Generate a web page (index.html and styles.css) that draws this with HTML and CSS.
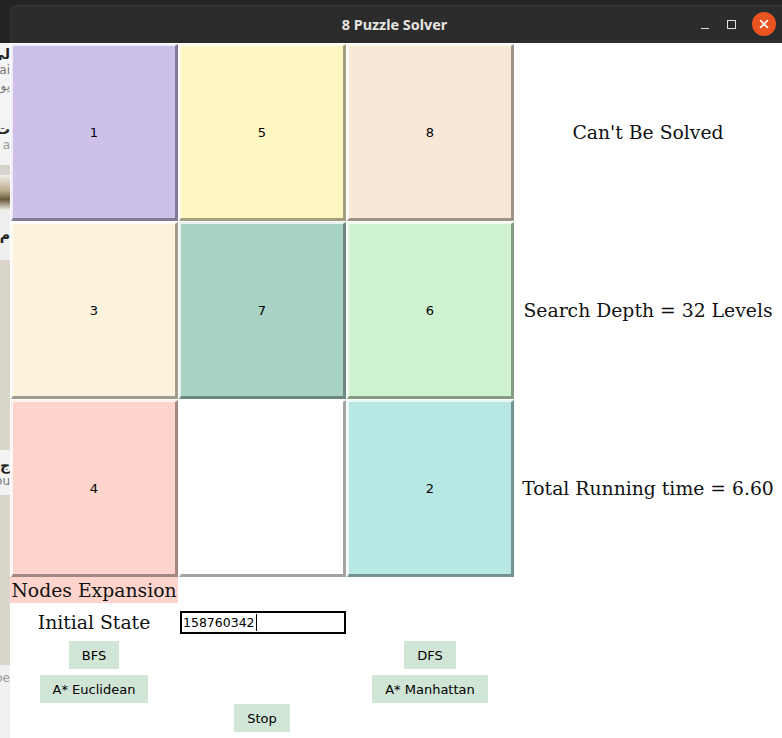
FILE: index.html
```html
<!DOCTYPE html>
<html>
<head>
<meta charset="utf-8">
<title>8 Puzzle Solver</title>
<link rel="stylesheet" href="styles.css">
</head>
<body>
<div class="screen">
  <div class="bgwin">
    <div class="bg-a"><span class="frag f-big">لي</span><span class="frag f-gray">ai</span><span class="frag f-gray">يو</span></div>
    <div class="bg-b"><span class="frag f-big">ت</span><span class="frag f-light">2 a</span></div>
    <div class="bg-band"></div>
    <div class="bg-img"></div>
    <div class="bg-c"><span class="frag f-big">م</span></div>
    <div class="bg-map"></div>
    <div class="bg-d"><span class="frag f-big">ج</span><span class="frag f-gray">ou</span></div>
    <div class="bg-map tall"></div>
    <div class="bg-e"><span class="frag f-light">oe</span></div>
  </div>

  <div class="window">
    <div class="titlebar">
      <span></span>
      <span class="title">8 Puzzle Solver</span>
      <div class="controls">
        <span class="ctl ctl-min"><i></i></span>
        <span class="ctl ctl-max"><i></i></span>
        <span class="ctl ctl-close">
          <svg width="10" height="10" viewBox="0 0 10 10"><path d="M1.5 1.5 L8.5 8.5 M8.5 1.5 L1.5 8.5" stroke="#fff" stroke-width="1.6" stroke-linecap="round"/></svg>
        </span>
      </div>
    </div>

    <div class="app">
      <div class="tile t-lav">1</div>
      <div class="tile t-lemon">5</div>
      <div class="tile t-bisque">8</div>
      <div class="info">Can't Be Solved</div>

      <div class="tile t-cream">3</div>
      <div class="tile t-teal">7</div>
      <div class="tile t-mint">6</div>
      <div class="info">Search Depth = 32 Levels</div>

      <div class="tile t-pink">4</div>
      <div class="tile t-blank"></div>
      <div class="tile t-aqua">2</div>
      <div class="info">Total Running time = 6.60</div>

      <div class="nodes">Nodes Expansion</div>

      <div class="label-init">Initial State</div>
      <div class="entry"><span>158760342</span><i class="caret"></i></div>

      <div class="btn b-bfs">BFS</div>
      <div class="btn b-dfs">DFS</div>

      <div class="btn b-euc">A* Euclidean</div>
      <div class="btn b-man">A* Manhattan</div>

      <div class="btn b-stop">Stop</div>
    </div>
  </div>
</div>
</body>
</html>
```

FILE: styles.css
```css
* { box-sizing: border-box; }
html, body { margin: 0; padding: 0; }
body { background: #222; }

.screen {
  position: relative;
  width: 782px;
  height: 738px;
  overflow: hidden;
  background: #232323;
}

/* background window strip peeking on the left */
.bgwin {
  position: absolute;
  left: 0;
  top: 43px;
  width: 10px;
  bottom: 0;
  display: flex;
  flex-direction: column;
  overflow: hidden;
  box-shadow: inset -1px 0 0 #9a9a9a;
}
.bgwin > div { overflow: hidden; display: flex; flex-direction: column; align-items: flex-end; }
.bg-a { height: 77px; background: #f4f4f4; padding-top: 2px; }
.bg-b { height: 45px; background: #f2f2f2; }
.bg-band { height: 10px; background: #d6d3cf; }
.bg-img { height: 35px; background: linear-gradient(180deg, #f1efea 0%, #b9ab8a 45%, #6a5a3c 70%, #efece6 100%); }
.bg-c { height: 50px; background: #efefef; justify-content: center; }
.bg-map { height: 190px; background: #d9d5cb; }
.bg-map.tall { height: 170px; }
.bg-d { height: 45px; background: #f3f3f3; justify-content: center; }
.bg-e { flex: 1; background: #f0f0f0; padding-top: 6px; }
.frag { white-space: nowrap; font-family: "DejaVu Sans", sans-serif; line-height: 1.3; }
.f-big { font-size: 14px; font-weight: bold; color: #222; }
.f-gray { font-size: 12px; color: #777; }
.f-light { font-size: 12px; color: #999; }

/* main window */
.window {
  position: absolute;
  left: 10px;
  top: 5px;
  right: 0;
  bottom: 0;
  display: flex;
  flex-direction: column;
}

.titlebar {
  height: 38px;
  flex: none;
  background: #2c2c2c;
  border-top-left-radius: 7px;
  box-shadow: inset 1px 1px 0 #383838;
  display: grid;
  grid-template-columns: 1fr auto 1fr;
  align-items: center;
}
.title {
  font-family: "Noto Sans", "DejaVu Sans", sans-serif;
  font-weight: bold;
  font-size: 14.4px;
  color: #e6e4e0;
  margin-left: -3px;
}
.controls {
  justify-self: end;
  display: flex;
  align-items: center;
  padding-right: 6px;
}
.ctl {
  width: 24px;
  height: 24px;
  display: flex;
  align-items: center;
  justify-content: center;
}
.ctl-min { margin-right: 2px; }
.ctl-min i { display: block; width: 8px; height: 1px; background: #e0e0e0; margin-top: 9px; }
.ctl-max { margin-right: 9px; }
.ctl-max i { display: block; width: 9px; height: 9px; border: 1px solid #e0e0e0; }
.ctl-close { border-radius: 50%; background: #e95420; }

/* application area */
.app {
  flex: 1;
  background: #fff;
  overflow: hidden;
  display: grid;
  grid-template-columns: 168px 168px 168px 1fr;
  grid-template-rows: 178px 178px 178px 26px 38px 34px 29px 29px;
  font-family: "DejaVu Sans", sans-serif;
  font-size: 13px;
  color: #000;
}

.tile {
  display: flex;
  align-items: center;
  justify-content: center;
  border-style: solid;
  border-width: 2px 3px 3px 2px;
  border-color: rgba(255,255,255,0.72) rgba(0,0,0,0.36) rgba(0,0,0,0.36) rgba(255,255,255,0.72);
  margin-left: 1px;
  margin-top: 1px;
  font-size: 13px;
}
.t-lav { background: #cdc0e9; }
.t-lemon { background: #fff7c2; }
.t-bisque { background: #f7e8d7; }
.t-cream { background: #fdf2dc; }
.t-teal { background: #a8d3c5; }
.t-mint { background: #d0f3cf; }
.t-pink { background: #ffd4cd; }
.t-blank { background: #fff; }
.t-aqua { background: #b8e8e3; }

.info {
  display: flex;
  align-items: center;
  justify-content: center;
  font-family: "DejaVu Serif", serif;
  font-size: 18.8px;
  color: #111;
  white-space: nowrap;
}

.nodes {
  grid-column: 1;
  grid-row: 4;
  background: #ffd4cd;
  font-family: "DejaVu Serif", serif;
  font-size: 18.8px;
  display: flex;
  align-items: center;
  justify-content: center;
  white-space: nowrap;
  color: #111;
}

.label-init {
  grid-column: 1;
  grid-row: 5;
  font-family: "DejaVu Serif", serif;
  font-size: 18.8px;
  display: flex;
  align-items: center;
  justify-content: center;
  color: #111;
}
.entry {
  grid-column: 2;
  grid-row: 5;
  align-self: center;
  justify-self: end;
  width: 166px;
  height: 23px;
  border: 2px solid #000;
  display: flex;
  align-items: center;
  padding-left: 1px;
  font-size: 12.5px;
  background: #fff;
}
.caret { display: block; width: 1px; height: 17px; background: #000; margin-left: 1px; }

.btn {
  align-self: start;
  justify-self: center;
  height: 28px;
  padding: 0 13px;
  background: #d1e5d6;
  display: flex;
  align-items: center;
  white-space: nowrap;
  font-size: 13px;
}
.b-bfs { grid-column: 1; grid-row: 6; }
.b-dfs { grid-column: 3; grid-row: 6; }
.b-euc { grid-column: 1; grid-row: 7; }
.b-man { grid-column: 3; grid-row: 7; }
.b-stop { grid-column: 2; grid-row: 8; }
```
